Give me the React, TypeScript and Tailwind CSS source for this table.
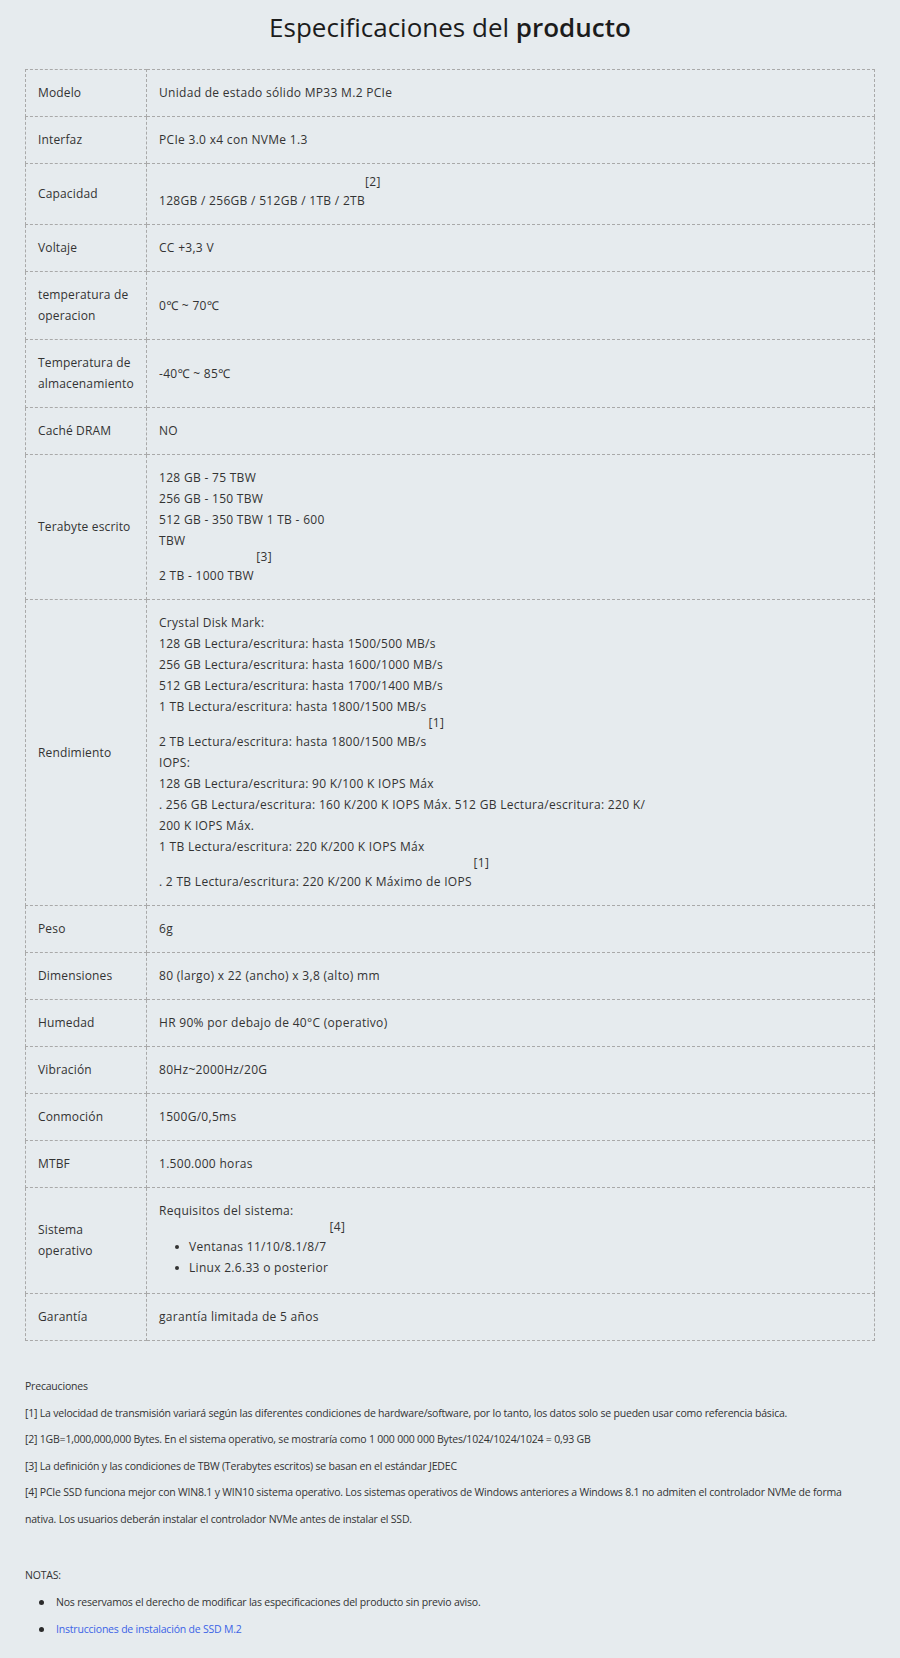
import React from "react";

const SupUp = ({ children }: { children: React.ReactNode }) => (
  <span className="text-[12px] leading-[12px] align-[19px]">{children}</span>
);

const SupDown = ({ children, cls }: { children: React.ReactNode; cls: string }) => (
  <span className={`text-[12px] leading-[16px] align-[-16px] ${cls}`}>{children}</span>
);

const L = ({ children }: { children: React.ReactNode }) => (
  <div className="leading-[21px] whitespace-nowrap">{children}</div>
);

type Row = { label: React.ReactNode; value: React.ReactNode };

const rows: Row[] = [
  { label: "Modelo", value: <L>Unidad de estado sólido MP33 M.2 PCIe</L> },
  { label: "Interfaz", value: <L>PCIe 3.0 x4 con NVMe 1.3</L> },
  {
    label: "Capacidad",
    value: (
      <L>
        128GB / 256GB / 512GB / 1TB / 2TB
        <SupUp>[2]</SupUp>
      </L>
    ),
  },
  { label: "Voltaje", value: <L>CC +3,3 V</L> },
  {
    label: (
      <>
        temperatura de
        <br />
        operacion
      </>
    ),
    value: <L>0℃ ~ 70℃</L>,
  },
  {
    label: (
      <>
        Temperatura de
        <br />
        almacenamiento
      </>
    ),
    value: <L>-40℃ ~ 85℃</L>,
  },
  { label: "Caché DRAM", value: <L>NO</L> },
  {
    label: "Terabyte escrito",
    value: (
      <>
        <L>128 GB - 75 TBW</L>
        <L>256 GB - 150 TBW</L>
        <L>512 GB - 350 TBW 1 TB - 600</L>
        <L>
          TBW<SupDown cls="ml-[71px]">[3]</SupDown>
        </L>
        <L>2 TB - 1000 TBW</L>
      </>
    ),
  },
  {
    label: "Rendimiento",
    value: (
      <>
        <L>Crystal Disk Mark:</L>
        <L>128 GB Lectura/escritura: hasta 1500/500 MB/s</L>
        <L>256 GB Lectura/escritura: hasta 1600/1000 MB/s</L>
        <L>512 GB Lectura/escritura: hasta 1700/1400 MB/s</L>
        <L>
          1 TB Lectura/escritura: hasta 1800/1500 MB/s
          <SupDown cls="ml-[2px]">[1]</SupDown>
        </L>
        <L>2 TB Lectura/escritura: hasta 1800/1500 MB/s</L>
        <L>IOPS:</L>
        <L>128 GB Lectura/escritura: 90 K/100 K IOPS Máx</L>
        <L>. 256 GB Lectura/escritura: 160 K/200 K IOPS Máx. 512 GB Lectura/escritura: 220 K/</L>
        <L>200 K IOPS Máx.</L>
        <L>
          1 TB Lectura/escritura: 220 K/200 K IOPS Máx
          <SupDown cls="ml-[49px]">[1]</SupDown>
        </L>
        <L>. 2 TB Lectura/escritura: 220 K/200 K Máximo de IOPS</L>
      </>
    ),
  },
  { label: "Peso", value: <L>6g</L> },
  { label: "Dimensiones", value: <L>80 (largo) x 22 (ancho) x 3,8 (alto) mm</L> },
  { label: "Humedad", value: <L>HR 90% por debajo de 40°C (operativo)</L> },
  { label: "Vibración", value: <L>80Hz~2000Hz/20G</L> },
  { label: "Conmoción", value: <L>1500G/0,5ms</L> },
  { label: "MTBF", value: <L>1.500.000 horas</L> },
  {
    label: (
      <>
        Sistema
        <br />
        operativo
      </>
    ),
    value: (
      <>
        <L>
          Requisitos del sistema:
          <SupDown cls="ml-[36px]">[4]</SupDown>
        </L>
        <ul className="mt-[1px] mb-[2px]">
          {["Ventanas 11/10/8.1/8/7", "Linux 2.6.33 o posterior"].map((t) => (
            <li key={t} className="flex items-center leading-[21px]">
              <span className="ml-[16px] h-[4px] w-[4px] rounded-full bg-[#333]" />
              <span className="ml-[10px]">{t}</span>
            </li>
          ))}
        </ul>
      </>
    ),
  },
  { label: "Garantía", value: <L>garantía limitada de 5 años</L> },
];

export default function App() {
  return (
    <div className="min-h-[1658px] bg-[#e6ebee] px-[25px] pt-[9px] pb-[40px] font-['Open_Sans','Noto_Sans',sans-serif] text-[#333]">
      <h1 className="text-center text-[26px] leading-[36px] text-[#1c1c1c] font-normal">
        Especificaciones del <span className="font-semibold">producto</span>
      </h1>

      <table className="mt-[24px] w-full table-fixed border-collapse text-[12px]">
        <colgroup>
          <col className="w-[121px]" />
          <col />
        </colgroup>
        <tbody>
          {rows.map((r, i) => (
            <tr key={i}>
              <td className="border border-dashed border-[#a9a9a9] px-3 pt-3 pb-[13px] align-middle leading-[21px] whitespace-nowrap tracking-[0.15px] text-[#333]">
                {r.label}
              </td>
              <td className="border border-dashed border-[#a9a9a9] px-3 pt-3 pb-[13px] align-middle tracking-[0.3px] text-[#333]">
                {r.value}
              </td>
            </tr>
          ))}
        </tbody>
      </table>

      <div className="mt-[32px] text-[10.5px] leading-[26.5px] tracking-[-0.2px] text-[#333]">
        <p>Precauciones</p>
        <p className="whitespace-nowrap">
          [1] La velocidad de transmisión variará según las diferentes condiciones de hardware/software, por lo tanto, los datos solo se pueden usar como referencia básica.
        </p>
        <p className="whitespace-nowrap">
          [2] 1GB=1,000,000,000 Bytes. En el sistema operativo, se mostraría como 1 000 000 000 Bytes/1024/1024/1024 = 0,93 GB
        </p>
        <p className="whitespace-nowrap">
          [3] La definición y las condiciones de TBW (Terabytes escritos) se basan en el estándar JEDEC
        </p>
        <p className="whitespace-nowrap">
          [4] PCIe SSD funciona mejor con WIN8.1 y WIN10 sistema operativo. Los sistemas operativos de Windows anteriores a Windows 8.1 no admiten el controlador NVMe de forma
          <br />
          nativa. Los usuarios deberán instalar el controlador NVMe antes de instalar el SSD.
        </p>

        <p className="mt-[30px] leading-[27px]">NOTAS:</p>
        <ul className="leading-[27px]">
          <li className="flex items-center">
            <span className="ml-[14px] h-[5px] w-[5px] rounded-full bg-[#2b2b2b]" />
            <span className="ml-[12px]">Nos reservamos el derecho de modificar las especificaciones del producto sin previo aviso.</span>
          </li>
          <li className="flex items-center">
            <span className="ml-[14px] h-[5px] w-[5px] rounded-full bg-[#2b2b2b]" />
            <a className="ml-[12px] text-[#3b63e6]" href="#">
              Instrucciones de instalación de SSD M.2
            </a>
          </li>
        </ul>
      </div>
    </div>
  );
}
